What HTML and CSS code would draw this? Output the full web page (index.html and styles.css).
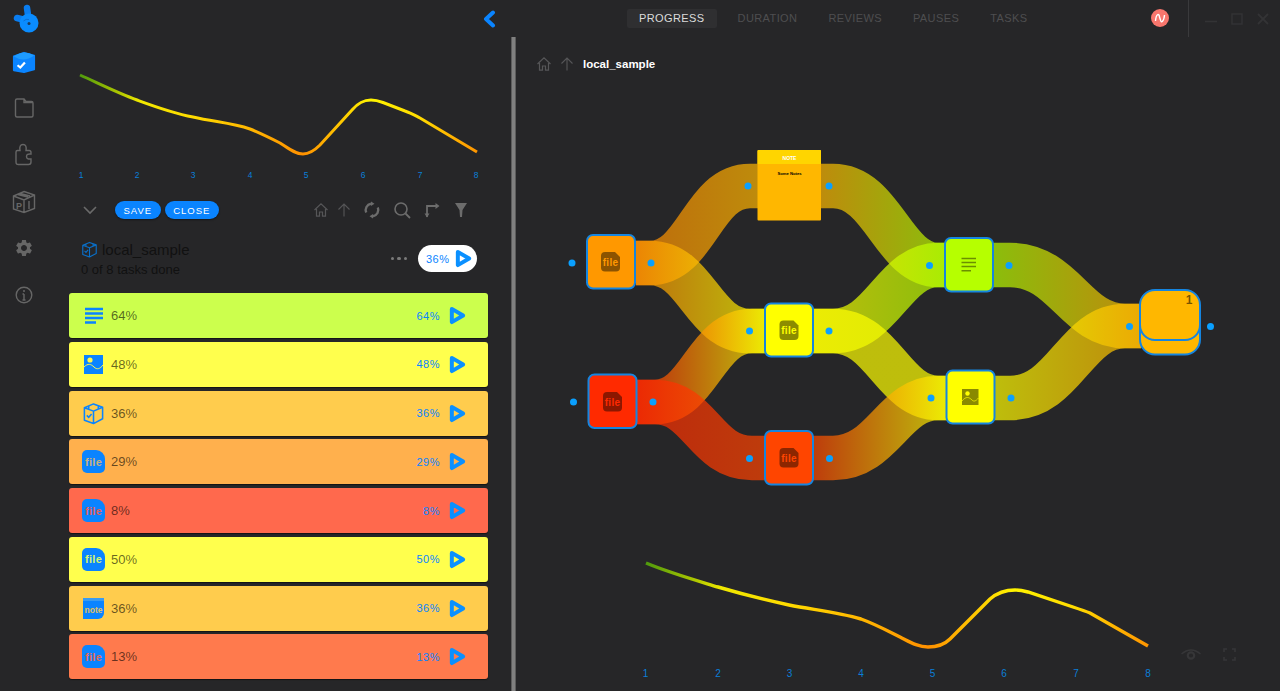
FILE: index.html
```html
<!DOCTYPE html>
<html lang="en">
<head>
  <meta charset="UTF-8" />
  <meta name="viewport" content="width=device-width, initial-scale=1.0"/>
  <title>Progress - local_sample</title>
  <link rel="stylesheet" href="styles.css">
</head>
<body>

<svg class="defs" width="0" height="0" aria-hidden="true">
  <defs>
    <symbol id="play" viewBox="0 0 18 20">
      <path d="M3 3 L15 10 L3 17 Z" fill="none" stroke="currentColor" stroke-width="4.2" stroke-linejoin="round"/>
    </symbol>
    <symbol id="cube" viewBox="0 0 24 24">
      <path d="M12 2 L21.5 5.5 V17.5 L12 22.5 L2.5 19 V6 Z M2.5 6 L12 9.5 L21.5 5.5 M12 9.5 V22.5 M7 3.8 V7.8 M17 3.5 V7.5" fill="none" stroke="currentColor" stroke-width="1.6" stroke-linejoin="round"/>
      <path d="M5 14 L7 16 L10 12.5" fill="none" stroke="currentColor" stroke-width="1.6"/>
    </symbol>
    <symbol id="home" viewBox="0 0 16 16">
      <path d="M1.5 8 L8 1.8 L14.5 8 M3.5 7 V14.2 H6.5 V10 H9.5 V14.2 H12.5 V7" fill="none" stroke="currentColor" stroke-width="1.2"/>
    </symbol>
    <symbol id="up" viewBox="0 0 16 16">
      <path d="M8 14.5 V2 M2.5 7.5 L8 2 L13.5 7.5" fill="none" stroke="currentColor" stroke-width="1.1"/>
    </symbol>
    <linearGradient id="trend-top" gradientUnits="userSpaceOnUse" x1="80" y1="0" x2="478" y2="0">
      <stop offset="0" stop-color="#4f9a0c"/>
      <stop offset="0.1" stop-color="#b0c800"/>
      <stop offset="0.15" stop-color="#f0e800"/>
      <stop offset="0.28" stop-color="#ffdc00"/>
      <stop offset="0.42" stop-color="#ffb800"/>
      <stop offset="0.56" stop-color="#ff9000"/>
      <stop offset="0.73" stop-color="#fff400"/>
      <stop offset="0.85" stop-color="#ffdc00"/>
      <stop offset="1" stop-color="#ff9400"/>
    </linearGradient>
    <linearGradient id="trend-bottom" gradientUnits="userSpaceOnUse" x1="646" y1="0" x2="1149" y2="0">
      <stop offset="0" stop-color="#4f9a0c"/>
      <stop offset="0.1" stop-color="#b0c800"/>
      <stop offset="0.15" stop-color="#f0e800"/>
      <stop offset="0.28" stop-color="#ffdc00"/>
      <stop offset="0.42" stop-color="#ffb800"/>
      <stop offset="0.56" stop-color="#ff9000"/>
      <stop offset="0.73" stop-color="#fff400"/>
      <stop offset="0.85" stop-color="#ffdc00"/>
      <stop offset="1" stop-color="#ff9400"/>
    </linearGradient>
  </defs>
</svg>

<div class="app">

  <nav class="rail">
    <div class="rail-logo">
      <svg width="30" height="32" viewBox="0 0 30 32">
        <path d="M17 5 L19 19 M7 15 L19 18" fill="none" stroke="#0a7df0" stroke-width="6.5" stroke-linecap="round"/>
        <circle cx="19" cy="20" r="9.5" fill="#0a8cff"/>
        <path d="M13.5 18 Q16 15.5 19 16.5" fill="none" stroke="#0a6fd8" stroke-width="1"/>
        <circle cx="19" cy="20.5" r="1.5" fill="#1b3a5c"/>
      </svg>
    </div>
    <a class="rail-item">
      <svg width="24" height="24" viewBox="0 0 26 26">
        <path d="M2 7 L13 3 L24 6 V21 L13 24 L2 22 Z" fill="#0a84ff" stroke="#0a84ff" stroke-width="2" stroke-linejoin="round"/>
        <path d="M2 7 Q13 -1 24 6 Q13 14 2 7 Z" fill="#1e9bff"/>
        <path d="M6 16.5 L9 19 L14 13.5" fill="none" stroke="#fff" stroke-width="2.4"/>
      </svg>
    </a>
    <a class="rail-item">
      <svg width="22" height="22" viewBox="0 0 22 22" class="line-ico">
        <path d="M2.5 3.5 Q2.5 2 4 2 H11 L13 4.5 H18.5 Q20 4.5 20 6 V18.5 Q20 20 18.5 20 H4 Q2.5 20 2.5 18.5 Z M11 2 V5.5 H20"/>
      </svg>
    </a>
    <a class="rail-item">
      <svg width="22" height="24" viewBox="0 0 22 24" class="line-ico">
        <path d="M3 9 Q3 7.5 4.5 7.5 H7 Q6 1.5 10 1.5 Q14 1.5 13 7.5 H16 Q18 7.5 18 9.5 V11 Q13.5 10.5 13.5 13.5 Q13.5 16.5 18 16 V19 Q18 21.5 15.5 21.5 H5.5 Q3 21.5 3 19 Z"/>
      </svg>
    </a>
    <a class="rail-item">
      <svg width="24" height="24" viewBox="0 0 24 24" class="line-ico">
        <path d="M12 1.5 L22.5 5 V18.5 L12 22.5 L1.5 19 V6 Z M1.5 6 L12 10 L22.5 5 M12 10 V22.5 M6 4.5 L16 7 M8 3.5 L18 6"/>
        <text x="4" y="19" class="rail-pi">P</text>
        <path d="M17 11 V19"/>
      </svg>
    </a>
    <a class="rail-item">
      <svg width="20" height="20" viewBox="0 0 24 24" fill="#666">
        <path d="M19.14 12.94c.04-.3.06-.61.06-.94 0-.32-.02-.64-.07-.94l2.03-1.58c.18-.14.23-.41.12-.61l-1.92-3.32c-.12-.22-.37-.29-.59-.22l-2.39.96c-.5-.38-1.03-.7-1.62-.94l-.36-2.54c-.04-.24-.24-.41-.48-.41h-3.84c-.24 0-.43.17-.47.41l-.36 2.54c-.59.24-1.13.57-1.62.94l-2.39-.96c-.22-.08-.47 0-.59.22L2.74 8.87c-.12.21-.08.47.12.61l2.03 1.58c-.05.3-.09.63-.09.94s.02.64.07.94l-2.03 1.58c-.18.14-.23.41-.12.61l1.92 3.32c.12.22.37.29.59.22l2.39-.96c.5.38 1.03.7 1.62.94l.36 2.54c.05.24.24.41.48.41h3.84c.24 0 .44-.17.47-.41l.36-2.54c.59-.24 1.13-.56 1.62-.94l2.39.96c.22.08.47 0 .59-.22l1.92-3.32c.12-.22.07-.47-.12-.61l-2.01-1.58zM12 15.6c-1.98 0-3.6-1.62-3.6-3.6s1.62-3.6 3.6-3.6 3.6 1.62 3.6 3.6-1.62 3.6-3.6 3.6z"/>
      </svg>
    </a>
    <a class="rail-item">
      <svg width="18" height="18" viewBox="0 0 18 18" class="line-ico">
        <circle cx="9" cy="9" r="7.8"/>
        <path d="M9 8 V14 M7.5 14 H10.5 M7.5 8 H9" />
        <circle cx="9" cy="5" r="1" fill="#666" stroke="none"/>
      </svg>
    </a>
  </nav>

  <aside class="side">
    <div class="side-body">
      <div class="collapse-row">
        <svg width="14" height="18" viewBox="0 0 14 18">
          <path d="M11 2.5 L4 9 L11 15.5" fill="none" stroke="#0a84ff" stroke-width="4" stroke-linecap="round" stroke-linejoin="round"/>
        </svg>
      </div>

      <svg class="trend" width="463" height="153" viewBox="48 37 463 153">
        <path d="M80 75 C100 84 118 93 137 100 C156 107 172 113 193 117 C215 122 232 123 250 129 C262 134 272 139 280 143 C288 148 295 154 303 154 C309 154 314 151 320 145 L352 110 C358 103 363 100 371 100 C375 100 379 101 383 102.5 L405 111 C411 113 416 116 420 118 L477 152" fill="none" stroke="url(#trend-top)" stroke-width="3"/>
        <g class="axis axis-small">
          <text x="81" y="178">1</text>
          <text x="137" y="178">2</text>
          <text x="193" y="178">3</text>
          <text x="250" y="178">4</text>
          <text x="306" y="178">5</text>
          <text x="363" y="178">6</text>
          <text x="420" y="178">7</text>
          <text x="476" y="178">8</text>
        </g>
      </svg>

      <div class="toolbar">
        <svg class="chev" width="16" height="10" viewBox="0 0 16 10">
          <path d="M2 2 L8 8 L14 2" fill="none" stroke="#6a6a6a" stroke-width="1.6"/>
        </svg>
        <button class="pill-btn save">SAVE</button>
        <button class="pill-btn">CLOSE</button>
        <div class="tools">
          <svg class="tool-dim" width="16" height="16"><use href="#home"/></svg>
          <svg class="tool-dim tool-up" width="16" height="16"><use href="#up"/></svg>
          <svg class="tool tool-sync" width="18" height="18" viewBox="0 0 18 18">
            <path d="M3.2 11.5 A6.3 6.3 0 0 1 8 2.8 M14.8 6.5 A6.3 6.3 0 0 1 10 15.2" fill="none" stroke="currentColor" stroke-width="2.4"/>
            <path d="M8 0.5 L11.5 2.8 L8 5 Z M10 13 L6.5 15.2 L10 17.5 Z" fill="currentColor"/>
          </svg>
          <svg class="tool tool-search" width="18" height="18" viewBox="0 0 18 18">
            <circle cx="8" cy="8" r="6" fill="none" stroke="currentColor" stroke-width="1.6"/>
            <path d="M12.5 12.5 L17 17" stroke="currentColor" stroke-width="1.8"/>
          </svg>
          <svg class="tool tool-route" width="16" height="16" viewBox="0 0 16 16">
            <path d="M3 15 V4 H12" fill="none" stroke="currentColor" stroke-width="1.8"/>
            <path d="M11.5 1 L15.5 4 L11.5 7 Z M0.5 11.5 H5.5 L3 15.5 Z" fill="currentColor"/>
          </svg>
          <svg class="tool tool-filter" width="14" height="16" viewBox="0 0 14 16">
            <path d="M1 1 H13 L8.5 8 L8 15 L6 15 L5.5 8 Z" fill="currentColor"/>
          </svg>
        </div>
      </div>

      <div class="title-row">
        <div>
          <div class="title-name">
            <svg class="title-cube" width="17" height="17"><use href="#cube"/></svg>
            <span>local_sample</span>
          </div>
          <div class="title-sub">0 of 8 tasks done</div>
        </div>
        <div class="title-actions">
          <span class="dots"><i></i><i></i><i></i></span>
          <div class="run-pill">
            <span>36%</span>
            <svg class="play" width="17" height="19"><use href="#play"/></svg>
          </div>
        </div>
      </div>

      <ul class="tasks">
        <li class="task lime">
          <span class="task-ico">
            <svg width="18" height="18" viewBox="0 0 18 18"><path d="M0 2 H18 M0 6.5 H18 M0 11 H18 M0 15.5 H11" stroke="#0a84ff" stroke-width="2.4"/></svg>
          </span>
          <span class="task-label">64%</span>
          <span class="task-pct">64%</span>
          <svg class="play" width="17" height="19"><use href="#play"/></svg>
        </li>
        <li class="task yellow">
          <span class="task-ico">
            <svg width="19" height="19" viewBox="0 0 19 19"><rect width="19" height="19" fill="#0a84ff"/><circle cx="6" cy="5" r="2.6" fill="#fff94d"/><path d="M0 12 C4 8 7 9 10 12 C13 15 16 14 19 10" fill="none" stroke="#fff94d" stroke-width="1"/></svg>
          </span>
          <span class="task-label">48%</span>
          <span class="task-pct">48%</span>
          <svg class="play" width="17" height="19"><use href="#play"/></svg>
        </li>
        <li class="task amber">
          <span class="task-ico cube-ico">
            <svg width="23" height="23"><use href="#cube"/></svg>
          </span>
          <span class="task-label">36%</span>
          <span class="task-pct">36%</span>
          <svg class="play" width="17" height="19"><use href="#play"/></svg>
        </li>
        <li class="task orange">
          <span class="task-ico file">file</span>
          <span class="task-label">29%</span>
          <span class="task-pct">29%</span>
          <svg class="play" width="17" height="19"><use href="#play"/></svg>
        </li>
        <li class="task red">
          <span class="task-ico file">file</span>
          <span class="task-label">8%</span>
          <span class="task-pct">8%</span>
          <svg class="play" width="17" height="19"><use href="#play"/></svg>
        </li>
        <li class="task yellow">
          <span class="task-ico file">file</span>
          <span class="task-label">50%</span>
          <span class="task-pct">50%</span>
          <svg class="play" width="17" height="19"><use href="#play"/></svg>
        </li>
        <li class="task amber">
          <span class="task-ico note">note</span>
          <span class="task-label">36%</span>
          <span class="task-pct">36%</span>
          <svg class="play" width="17" height="19"><use href="#play"/></svg>
        </li>
        <li class="task coral">
          <span class="task-ico file">file</span>
          <span class="task-label">13%</span>
          <span class="task-pct">13%</span>
          <svg class="play" width="17" height="19"><use href="#play"/></svg>
        </li>
      </ul>
    </div>
    <div class="scrollbar"></div>
  </aside>

  <main class="main">
    <header class="topbar">
      <div class="tabs">
        <a class="tab active">PROGRESS</a>
        <a class="tab">DURATION</a>
        <a class="tab">REVIEWS</a>
        <a class="tab">PAUSES</a>
        <a class="tab">TASKS</a>
      </div>
      <div class="status">
        <svg width="18" height="18" viewBox="0 0 18 18">
          <circle cx="9" cy="9" r="9" fill="#f8766d"/>
          <path d="M4.5 12 C5 5 8 3.5 8.5 8 L9.5 11 C10 14.5 13 12.5 13.5 6" fill="none" stroke="#fff" stroke-width="1.4"/>
        </svg>
      </div>
      <div class="win-controls">
        <svg width="12" height="12" viewBox="0 0 12 12"><path d="M0 8.5 H12" stroke="#333335" stroke-width="1.6"/></svg>
        <svg width="12" height="12" viewBox="0 0 12 12"><rect x="1" y="1" width="10" height="10" fill="none" stroke="#333335" stroke-width="1.4"/></svg>
        <svg width="12" height="12" viewBox="0 0 12 12"><path d="M1 1 L11 11 M11 1 L1 11" stroke="#333335" stroke-width="1.8"/></svg>
      </div>
    </header>

    <div class="crumbs">
      <svg class="tool-dim" width="16" height="16"><use href="#home"/></svg>
      <svg class="tool-dim" width="16" height="16"><use href="#up"/></svg>
      <span class="crumb-name">local_sample</span>
    </div>

    <svg class="flow" width="764" height="430" viewBox="516 90 764 430">
      <defs>
        <linearGradient id="l-a-note" gradientUnits="userSpaceOnUse" x1="636" y1="0" x2="760" y2="0"><stop offset="0" stop-color="#ff8a00"/><stop offset="1" stop-color="#ffb700"/></linearGradient>
        <linearGradient id="l-a-file" gradientUnits="userSpaceOnUse" x1="636" y1="0" x2="766" y2="0"><stop offset="0" stop-color="#ff9000"/><stop offset="1" stop-color="#ffff00"/></linearGradient>
        <linearGradient id="l-b-file" gradientUnits="userSpaceOnUse" x1="637" y1="0" x2="766" y2="0"><stop offset="0" stop-color="#ff2a00"/><stop offset="1" stop-color="#ffff00"/></linearGradient>
        <linearGradient id="l-b-red" gradientUnits="userSpaceOnUse" x1="637" y1="0" x2="766" y2="0"><stop offset="0" stop-color="#ff2a00"/><stop offset="1" stop-color="#ff4500"/></linearGradient>
        <linearGradient id="l-note-doc" gradientUnits="userSpaceOnUse" x1="820" y1="0" x2="946" y2="0"><stop offset="0" stop-color="#ffb700"/><stop offset="1" stop-color="#b6ff00"/></linearGradient>
        <linearGradient id="l-file-doc" gradientUnits="userSpaceOnUse" x1="812" y1="0" x2="946" y2="0"><stop offset="0" stop-color="#ffff00"/><stop offset="1" stop-color="#b6ff00"/></linearGradient>
        <linearGradient id="l-file-img" gradientUnits="userSpaceOnUse" x1="812" y1="0" x2="947" y2="0"><stop offset="0" stop-color="#ffff00"/><stop offset="1" stop-color="#ffff00"/></linearGradient>
        <linearGradient id="l-red-img" gradientUnits="userSpaceOnUse" x1="812" y1="0" x2="947" y2="0"><stop offset="0" stop-color="#ff4500"/><stop offset="1" stop-color="#ffff00"/></linearGradient>
        <linearGradient id="l-doc-end" gradientUnits="userSpaceOnUse" x1="992" y1="0" x2="1141" y2="0"><stop offset="0" stop-color="#b6ff00"/><stop offset="1" stop-color="#ffb700"/></linearGradient>
        <linearGradient id="l-img-end" gradientUnits="userSpaceOnUse" x1="994" y1="0" x2="1141" y2="0"><stop offset="0" stop-color="#ffff00"/><stop offset="1" stop-color="#ffb700"/></linearGradient>
      </defs>

      <g class="links">
        <path stroke="url(#l-a-note)" d="M636 263 H650 C697 263 702 186 750 186 H760"/>
        <path stroke="url(#l-a-file)" d="M636 263 H650 C697 263 702 331 750 331 H766"/>
        <path stroke="url(#l-b-file)" d="M637 402 H655 C700 402 705 331 752 331 H766"/>
        <path stroke="url(#l-b-red)" d="M637 402 H655 C700 402 705 458 752 458 H766"/>
        <path stroke="url(#l-note-doc)" d="M820 186 H833 C883 186 893 265 938 265 H946"/>
        <path stroke="url(#l-file-doc)" d="M812 331 H833 C883 331 893 265 938 265 H946"/>
        <path stroke="url(#l-file-img)" d="M812 331 H833 C883 331 893 398 938 398 H947"/>
        <path stroke="url(#l-red-img)" d="M812 458 H833 C883 458 893 398 938 398 H947"/>
        <path stroke="url(#l-doc-end)" d="M992 265 H1010 C1065 265 1075 326 1125 326 H1141"/>
        <path stroke="url(#l-img-end)" d="M994 398 H1010 C1065 398 1075 326 1125 326 H1141"/>
      </g>

      <!-- note node -->
      <rect x="757.5" y="150" width="63.5" height="70.5" rx="1" fill="#ffb700"/>
      <path d="M757.5 164 V151 Q757.5 150 758.5 150 H820 Q821 150 821 151 V164 Z" fill="#ffd500"/>
      <text class="note-head" x="789.5" y="159.5">NOTE</text>
      <text class="note-body" x="789.5" y="174.5">Some Notes</text>

      <!-- task nodes -->
      <rect class="node" x="587" y="235" width="48" height="53.5" rx="6" fill="#ff9800"/>
      <g class="file-mark" transform="translate(601 252)">
        <path d="M4 0 H14 L19 5 V15.5 Q19 19.5 15 19.5 H4 Q0 19.5 0 15.5 V4 Q0 0 4 0 Z"/>
        <text x="9.5" y="13.5" fill="#ff9800">file</text>
      </g>
      <rect class="node" x="588.5" y="374.5" width="48" height="53.5" rx="6" fill="#ff2a00"/>
      <g class="file-mark" transform="translate(603 392)">
        <path d="M4 0 H14 L19 5 V15.5 Q19 19.5 15 19.5 H4 Q0 19.5 0 15.5 V4 Q0 0 4 0 Z"/>
        <text x="9.5" y="13.5" fill="#ff2a00">file</text>
      </g>
      <rect class="node" x="765" y="303.5" width="48" height="53" rx="6" fill="#ffff00"/>
      <g class="file-mark" transform="translate(779.5 320.5)">
        <path d="M4 0 H14 L19 5 V15.5 Q19 19.5 15 19.5 H4 Q0 19.5 0 15.5 V4 Q0 0 4 0 Z"/>
        <text x="9.5" y="13.5" fill="#ffff00">file</text>
      </g>
      <rect class="node" x="765" y="431" width="48" height="53.5" rx="6" fill="#ff4500"/>
      <g class="file-mark" transform="translate(779.5 448)">
        <path d="M4 0 H14 L19 5 V15.5 Q19 19.5 15 19.5 H4 Q0 19.5 0 15.5 V4 Q0 0 4 0 Z"/>
        <text x="9.5" y="13.5" fill="#ff4500">file</text>
      </g>
      <rect class="node" x="945" y="238" width="48" height="53.5" rx="6" fill="#b6ff00"/>
      <path d="M961.5 258.5 H976 M961.5 262.5 H976 M961.5 266.5 H976 M961.5 270.8 H971" stroke="#6b8f00" stroke-width="1.6"/>
      <rect class="node" x="946.5" y="370.5" width="48" height="53" rx="6" fill="#ffff00"/>
      <rect x="962" y="389" width="16.5" height="16" fill="#8a8a00"/>
      <circle cx="967.5" cy="393.5" r="2.2" fill="#ffff00"/>
      <path d="M962 401 C966 396 969 397 972 400 C974 402 976 401 978.5 398" fill="none" stroke="#ffff00" stroke-width="0.7"/>

      <!-- end node -->
      <rect class="node" x="1140" y="303" width="60" height="51.5" rx="15" fill="#ffb700"/>
      <rect class="node" x="1140" y="290" width="60" height="50" rx="15" fill="#ffb700"/>
      <text class="end-count" x="1189" y="304">1</text>

      <g class="ports">
        <circle cx="572" cy="263" r="3.5"/><circle cx="651" cy="263" r="3.5"/>
        <circle cx="573.5" cy="402" r="3.5"/><circle cx="653" cy="402" r="3.5"/>
        <circle cx="748" cy="186" r="3.5"/><circle cx="829" cy="186" r="3.5"/>
        <circle cx="749.5" cy="331" r="3.5"/><circle cx="829" cy="331" r="3.5"/>
        <circle cx="749.5" cy="458.5" r="3.5"/><circle cx="829.5" cy="458.5" r="3.5"/>
        <circle cx="929.5" cy="265.5" r="3.5"/><circle cx="1009" cy="265.5" r="3.5"/>
        <circle cx="931" cy="398" r="3.5"/><circle cx="1011" cy="398" r="3.5"/>
        <circle cx="1129.5" cy="326.5" r="3.5"/><circle cx="1210.5" cy="326.5" r="3.5"/>
      </g>
    </svg>

    <svg class="trend" width="764" height="171" viewBox="516 520 764 171">
      <path d="M646 563 C670 573 695 580 718 587 C742 594 765 600 789 605 C815 610 838 612 861 619 C875 624 888 631 900 637 C910 642 918 647 928 647 C937 647 944 645 950 639 L990 599 C997 593 1006 590 1015 590 C1020 590 1024 591 1028 592 L1073 607 C1079 609 1085 611 1090 613 L1148 646" fill="none" stroke="url(#trend-bottom)" stroke-width="3.4"/>
      <g class="axis">
        <text x="645.5" y="677">1</text>
        <text x="718" y="677">2</text>
        <text x="789.5" y="677">3</text>
        <text x="861" y="677">4</text>
        <text x="932.5" y="677">5</text>
        <text x="1004" y="677">6</text>
        <text x="1076" y="677">7</text>
        <text x="1148" y="677">8</text>
      </g>
    </svg>

    <div class="view-tools">
      <svg width="20" height="12" viewBox="0 0 20 12">
        <path d="M0.5 5 Q10 -3 19.5 5" fill="none" stroke="#363638" stroke-width="1.5"/>
        <circle cx="10" cy="6.5" r="3.2" fill="none" stroke="#363638" stroke-width="2.2"/>
      </svg>
      <svg width="13" height="13" viewBox="0 0 13 13">
        <path d="M1 4 V1 H4 M9 1 H12 V4 M12 9 V12 H9 M4 12 H1 V9" fill="none" stroke="#363638" stroke-width="1.6"/>
      </svg>
    </div>
  </main>

</div>

</body>
</html>
```

FILE: styles.css
```css
* {
  box-sizing: border-box;
}
html, body {
  margin: 0;
  padding: 0;
  height: 100%;
  overflow: hidden;
}
body {
  font-family: "Liberation Sans", Arial, sans-serif;
  background: #262628;
  color: #111;
}
.defs {
  position: absolute;
}
.app {
  display: flex;
  height: 691px;
}

/* left icon rail */
.rail {
  width: 48px;
  flex: none;
  display: flex;
  flex-direction: column;
  align-items: center;
}
.rail-logo {
  height: 38.5px;
  padding-top: 3px;
  padding-left: 2px;
}
.rail-item {
  height: 46.6px;
  display: flex;
  align-items: center;
  justify-content: center;
}
.line-ico {
  fill: none;
  stroke: #666;
  stroke-width: 1.4;
}
.rail-pi {
  font-size: 9px;
  font-weight: bold;
  fill: #666;
  stroke: none;
}

/* task side panel */
.side {
  width: 468px;
  flex: none;
  display: flex;
}
.side-body {
  width: 463px;
}
.scrollbar {
  width: 5px;
  margin-top: 37px;
  background: #808080;
  border-left: 1px solid #5c5c5c;
  border-right: 1px solid #5c5c5c;
}
.collapse-row {
  height: 37px;
  display: flex;
  justify-content: flex-end;
  align-items: center;
  padding-right: 15px;
}
.trend {
  display: block;
}
.axis text {
  fill: #0a7fd8;
  font-size: 10px;
  text-anchor: middle;
}
.axis-small text {
  font-size: 8.5px;
}
.toolbar {
  height: 40px;
  padding-left: 34px;
  display: flex;
  align-items: center;
}
.chev {
  margin-right: 17px;
}
.pill-btn {
  height: 18px;
  padding: 0 8.5px;
  border: 0;
  border-radius: 9px;
  background: #0a84ff;
  color: #fff;
  font-family: inherit;
  font-size: 9.5px;
  letter-spacing: 1px;
  box-shadow: 0 1px 2px rgba(0, 0, 0, 0.4);
}
.pill-btn.save {
  margin-right: 4px;
}
.tools {
  margin-left: auto;
  margin-right: 43px;
  display: flex;
  align-items: center;
}
.tool-dim {
  color: #565658;
}
.tool {
  color: #6c6c6c;
}
.tool-up { margin-left: 7px; }
.tool-sync { margin-left: 11px; }
.tool-search { margin-left: 12px; }
.tool-route { margin-left: 13px; }
.tool-filter { margin-left: 14px; }
.title-row {
  height: 63px;
  padding: 9px 34px 0 33px;
  display: flex;
  justify-content: space-between;
}
.title-name {
  display: flex;
  align-items: center;
  gap: 4px;
  font-size: 15px;
  height: 20px;
  color: #111;
}
.title-cube {
  color: #0a6fc8;
}
.title-sub {
  margin-top: 3px;
  font-size: 13px;
  line-height: 16px;
  color: #111;
}
.title-actions {
  display: flex;
  align-items: center;
  height: 27px;
  margin-top: 6px;
  gap: 11px;
}
.dots {
  display: flex;
  gap: 3px;
}
.dots i {
  width: 3.5px;
  height: 3.5px;
  border-radius: 50%;
  background: #7a7a7a;
}
.run-pill {
  width: 59px;
  height: 27px;
  padding-left: 8px;
  border-radius: 14px;
  background: #fff;
  display: flex;
  align-items: center;
  gap: 5px;
  font-size: 11px;
  letter-spacing: 0.5px;
  color: #0a84ff;
}
.play {
  color: #0a90ff;
  flex: none;
}
.tasks {
  list-style: none;
  margin: 0;
  padding: 0 23px 0 21px;
  display: flex;
  flex-direction: column;
  gap: 3.75px;
}
.task {
  height: 45px;
  padding: 0 22px 0 13px;
  border-radius: 3px;
  display: flex;
  align-items: center;
  box-shadow: 0 1px 1px rgba(0, 0, 0, 0.5);
}
.task.lime { background: #ccff4d; --mark: #d8f57a; }
.task.yellow { background: #ffff4d; --mark: #d6f56e; }
.task.amber { background: #ffcc4d; --mark: #e0c060; }
.task.orange { background: #ffb04d; --mark: #c8b080; }
.task.red { background: #ff694d; --mark: #e0605a; }
.task.coral { background: #ff7a4d; --mark: #e06a55; }
.task-ico {
  width: 23px;
  height: 23px;
  margin-right: 6px;
  flex: none;
  display: flex;
  align-items: center;
  justify-content: center;
}
.task-ico.file {
  background: #0a84ff;
  border-radius: 5px 9px 5px 5px;
  color: var(--mark);
  font-size: 11px;
  font-weight: bold;
  letter-spacing: 0.3px;
}
.task-ico.note {
  background: #0a84ff;
  border-radius: 0 0 6px 0;
  border-top: 3px solid #3a9bf0;
  color: var(--mark);
  font-size: 8.5px;
  font-weight: bold;
  width: 21px;
  height: 21px;
  margin-left: 1px;
  margin-right: 7px;
}
.cube-ico {
  color: #0a84ff;
}
.task-label {
  flex: 1;
  font-size: 13px;
  color: rgba(0, 0, 0, 0.6);
}
.task-pct {
  margin-right: 9px;
  font-size: 11px;
  letter-spacing: 0.5px;
  color: #0a84ff;
}

/* main panel */
.main {
  position: relative;
  flex: 1;
}
.topbar {
  height: 37px;
  display: flex;
}
.tabs {
  margin-left: 111px;
  padding-top: 9px;
  display: flex;
  align-items: flex-start;
  gap: 7px;
  font-size: 11px;
  letter-spacing: 0.4px;
}
.tab {
  height: 19px;
  padding: 0 12px;
  line-height: 19px;
  color: #4e4e50;
}
.tab.active {
  margin-right: 2px;
  background: #2f2f31;
  border-radius: 2px;
  color: #dcdcdc;
}
.status {
  margin-left: auto;
  padding: 9px 19px 0 0;
  border-right: 1px solid #3a3a3c;
  width: 38px;
}
.win-controls {
  width: 91px;
  padding: 13px 0 0 16px;
  display: flex;
  gap: 14px;
  align-items: flex-start;
}
.crumbs {
  height: 53px;
  padding: 19px 0 0 20px;
  display: flex;
  align-items: flex-start;
  gap: 7px;
}
.crumb-name {
  margin-left: 1px;
  font-size: 11.5px;
  line-height: 16px;
  font-weight: bold;
  color: #fff;
}
.flow {
  display: block;
}
.links path {
  fill: none;
  stroke-width: 44.6;
  opacity: 0.7;
}
.node {
  stroke: #1585e0;
  stroke-width: 2;
}
.file-mark path {
  fill: rgba(0, 0, 0, 0.45);
}
.file-mark text {
  font-size: 10px;
  font-weight: bold;
  letter-spacing: 0.3px;
  text-anchor: middle;
}
.note-head {
  font-size: 5px;
  font-weight: bold;
  fill: #fff;
  text-anchor: middle;
}
.note-body {
  font-size: 4.2px;
  font-weight: bold;
  fill: #000;
  text-anchor: middle;
}
.end-count {
  font-size: 12px;
  font-weight: bold;
  fill: rgba(0, 0, 0, 0.55);
  text-anchor: middle;
}
.ports circle {
  fill: #0aa0ff;
}
.view-tools {
  position: absolute;
  left: 665px;
  top: 648px;
  width: 55px;
  display: flex;
  align-items: center;
  justify-content: space-between;
}
```
